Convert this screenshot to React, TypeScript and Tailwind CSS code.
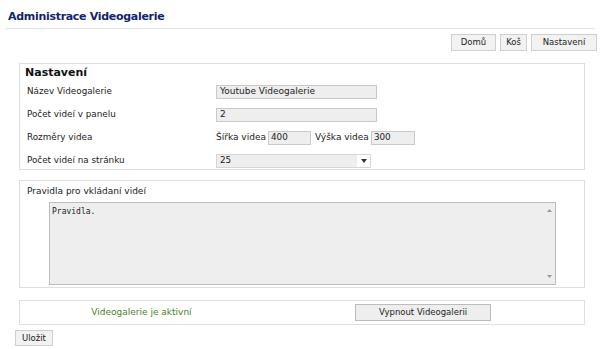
export default function App() {
  const rows = [
    { label: "Název Videogalerie", kind: "text", value: "Youtube Videogalerie" },
    { label: "Počet videí v panelu", kind: "text", value: "2" },
    { label: "Rozměry videa", kind: "size" },
    { label: "Počet videí na stránku", kind: "select", value: "25" },
  ];

  return (
    <div className="w-[600px] h-[349px] bg-white text-[8.8px] text-[#222] font-['DejaVu_Sans',sans-serif] overflow-hidden">
      <div className="mx-[5px] border-b border-[#e4e4e4] pl-[3px] pt-[11px] h-[29px]">
        <h1 className="text-[11px] font-bold text-[#14236e] leading-none tracking-[-0.3px]">
          Administrace Videogalerie
        </h1>
      </div>

      <div className="flex justify-end gap-[4px] pr-[3px] mt-[5px] text-[8.5px]">
        <button className="h-[17px] px-[9px] bg-[#f2f2f2] border border-[#cfcfcf] leading-none">Domů</button>
        <button className="h-[17px] px-[5px] bg-[#f2f2f2] border border-[#cfcfcf] leading-none">Koš</button>
        <button className="h-[17px] w-[66px] bg-[#f2f2f2] border border-[#cfcfcf] leading-none">Nastavení</button>
      </div>

      <div className="ml-[19px] w-[566px] mt-[12px] border border-[#dedede] h-[107px] pl-[5px] pt-[2px]">
        <div className="text-[11px] font-bold leading-[14px] text-[#111]">Nastavení</div>
        <div className="flex flex-col">
          {rows.map((r) => (
            <div key={r.label} className="flex items-center h-[23px]">
              <div className="w-[191px] pl-[2px]">{r.label}</div>
              {r.kind === "text" && (
                <div className="w-[161px] h-[14px] bg-[#eeeeee] border border-[#c9c9c9] px-[3px] flex items-center text-[9px]">
                  {r.value}
                </div>
              )}
              {r.kind === "size" && (
                <div className="flex items-center">
                  <span className="text-[9px] mr-[2px]">Šířka videa</span>
                  <div className="w-[43px] h-[14px] bg-[#eeeeee] border border-[#c9c9c9] px-[2px] flex items-center">400</div>
                  <span className="text-[9px] ml-[4px] mr-[2px]">Výška videa</span>
                  <div className="w-[44px] h-[14px] bg-[#eeeeee] border border-[#c9c9c9] px-[2px] flex items-center">300</div>
                </div>
              )}
              {r.kind === "select" && (
                <div className="w-[155px] h-[14px] border border-[#d6d6d6] flex items-center">
                  <div className="w-[140px] h-full bg-[#eeeeee] px-[3px] flex items-center">{r.value}</div>
                  <div className="flex-1 flex items-center justify-center">
                    <svg width="6" height="4" viewBox="0 0 6 4"><path d="M0 0h6L3 4z" fill="#333" /></svg>
                  </div>
                </div>
              )}
            </div>
          ))}
        </div>
      </div>

      <div className="ml-[19px] w-[566px] mt-[10px] border border-[#dedede] h-[108px] pl-[7px] pt-[4px]">
        <div className="text-[9px] leading-[12px]">Pravidla pro vkládaní videí</div>
        <div className="ml-[22px] mt-[5px] w-[507px] h-[83px] bg-[#eeeeee] border border-[#bdbdbd] flex">
          <div className="flex-1 px-[2px] pt-[3px] font-['DejaVu_Sans_Mono',monospace] text-[8px]">Pravidla.</div>
          <div className="w-[12px] flex flex-col justify-between items-center py-[6px]">
            <svg width="5" height="3" viewBox="0 0 5 3"><path d="M0 3h5L2.5 0z" fill="#999" /></svg>
            <svg width="5" height="3" viewBox="0 0 5 3"><path d="M0 0h5L2.5 3z" fill="#999" /></svg>
          </div>
        </div>
      </div>

      <div className="ml-[19px] w-[566px] mt-[12px] border border-[#e0e0e0] h-[25px] flex items-center">
        <div className="w-[243px] text-center text-[9px] text-[#4d7f1d]">Videogalerie je aktivní</div>
        <button className="ml-[92px] w-[136px] h-[17px] bg-[#eeeeee] border border-[#bcbcbc] text-[8.5px] leading-none">
          Vypnout Videogalerii
        </button>
      </div>

      <div className="pl-[15px] mt-[5px]">
        <button className="w-[38px] h-[16px] bg-[#f2f2f2] border border-[#cfcfcf] leading-none text-[8.5px]">Uložit</button>
      </div>
    </div>
  );
}
